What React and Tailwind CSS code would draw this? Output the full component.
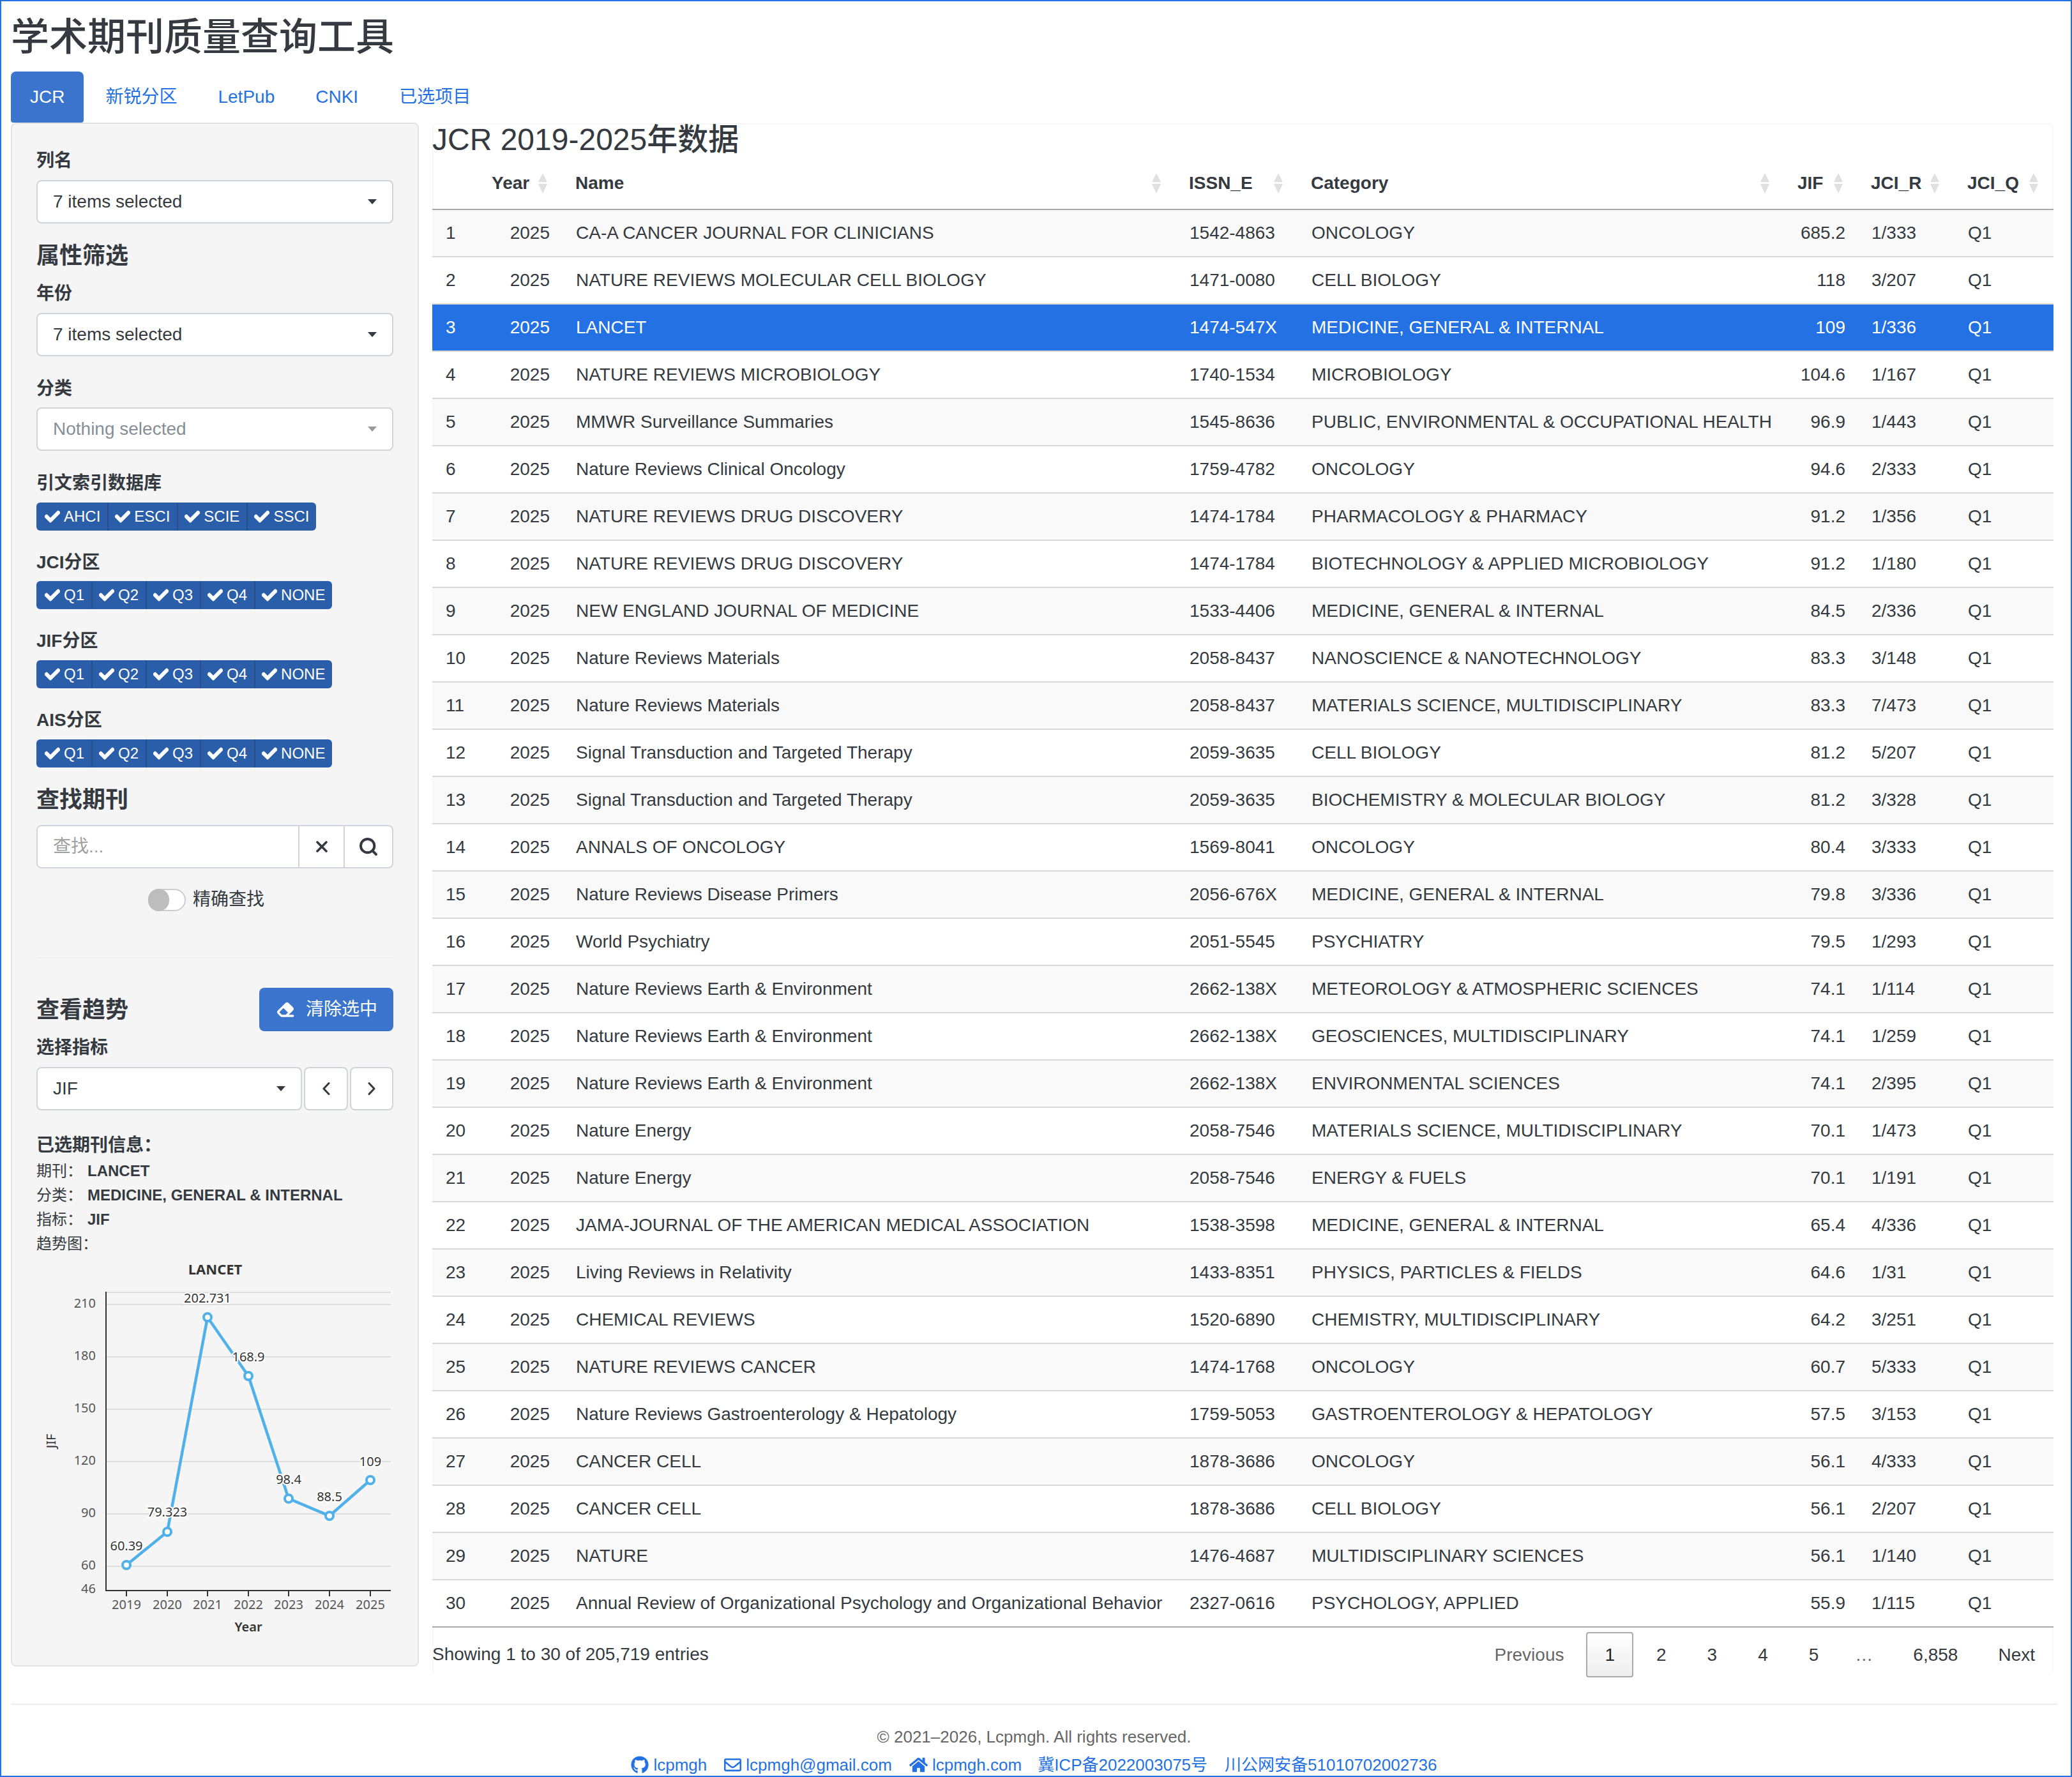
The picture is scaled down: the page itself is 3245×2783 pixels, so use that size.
import React from 'react';
import { FaCheck, FaGithub, FaRegEnvelope, FaHome } from 'react-icons/fa';
import { FaEraser } from 'react-icons/fa6';
import { Search } from 'lucide-react';

const rows = [
  ['CA-A CANCER JOURNAL FOR CLINICIANS', '1542-4863', 'ONCOLOGY', '685.2', '1/333'],
  ['NATURE REVIEWS MOLECULAR CELL BIOLOGY', '1471-0080', 'CELL BIOLOGY', '118', '3/207'],
  ['LANCET', '1474-547X', 'MEDICINE, GENERAL & INTERNAL', '109', '1/336'],
  ['NATURE REVIEWS MICROBIOLOGY', '1740-1534', 'MICROBIOLOGY', '104.6', '1/167'],
  ['MMWR Surveillance Summaries', '1545-8636', 'PUBLIC, ENVIRONMENTAL & OCCUPATIONAL HEALTH', '96.9', '1/443'],
  ['Nature Reviews Clinical Oncology', '1759-4782', 'ONCOLOGY', '94.6', '2/333'],
  ['NATURE REVIEWS DRUG DISCOVERY', '1474-1784', 'PHARMACOLOGY & PHARMACY', '91.2', '1/356'],
  ['NATURE REVIEWS DRUG DISCOVERY', '1474-1784', 'BIOTECHNOLOGY & APPLIED MICROBIOLOGY', '91.2', '1/180'],
  ['NEW ENGLAND JOURNAL OF MEDICINE', '1533-4406', 'MEDICINE, GENERAL & INTERNAL', '84.5', '2/336'],
  ['Nature Reviews Materials', '2058-8437', 'NANOSCIENCE & NANOTECHNOLOGY', '83.3', '3/148'],
  ['Nature Reviews Materials', '2058-8437', 'MATERIALS SCIENCE, MULTIDISCIPLINARY', '83.3', '7/473'],
  ['Signal Transduction and Targeted Therapy', '2059-3635', 'CELL BIOLOGY', '81.2', '5/207'],
  ['Signal Transduction and Targeted Therapy', '2059-3635', 'BIOCHEMISTRY & MOLECULAR BIOLOGY', '81.2', '3/328'],
  ['ANNALS OF ONCOLOGY', '1569-8041', 'ONCOLOGY', '80.4', '3/333'],
  ['Nature Reviews Disease Primers', '2056-676X', 'MEDICINE, GENERAL & INTERNAL', '79.8', '3/336'],
  ['World Psychiatry', '2051-5545', 'PSYCHIATRY', '79.5', '1/293'],
  ['Nature Reviews Earth & Environment', '2662-138X', 'METEOROLOGY & ATMOSPHERIC SCIENCES', '74.1', '1/114'],
  ['Nature Reviews Earth & Environment', '2662-138X', 'GEOSCIENCES, MULTIDISCIPLINARY', '74.1', '1/259'],
  ['Nature Reviews Earth & Environment', '2662-138X', 'ENVIRONMENTAL SCIENCES', '74.1', '2/395'],
  ['Nature Energy', '2058-7546', 'MATERIALS SCIENCE, MULTIDISCIPLINARY', '70.1', '1/473'],
  ['Nature Energy', '2058-7546', 'ENERGY & FUELS', '70.1', '1/191'],
  ['JAMA-JOURNAL OF THE AMERICAN MEDICAL ASSOCIATION', '1538-3598', 'MEDICINE, GENERAL & INTERNAL', '65.4', '4/336'],
  ['Living Reviews in Relativity', '1433-8351', 'PHYSICS, PARTICLES & FIELDS', '64.6', '1/31'],
  ['CHEMICAL REVIEWS', '1520-6890', 'CHEMISTRY, MULTIDISCIPLINARY', '64.2', '3/251'],
  ['NATURE REVIEWS CANCER', '1474-1768', 'ONCOLOGY', '60.7', '5/333'],
  ['Nature Reviews Gastroenterology & Hepatology', '1759-5053', 'GASTROENTEROLOGY & HEPATOLOGY', '57.5', '3/153'],
  ['CANCER CELL', '1878-3686', 'ONCOLOGY', '56.1', '4/333'],
  ['CANCER CELL', '1878-3686', 'CELL BIOLOGY', '56.1', '2/207'],
  ['NATURE', '1476-4687', 'MULTIDISCIPLINARY SCIENCES', '56.1', '1/140'],
  ['Annual Review of Organizational Psychology and Organizational Behavior', '2327-0616', 'PSYCHOLOGY, APPLIED', '55.9', '1/115'],
];

const quartiles = ['Q1', 'Q2', 'Q3', 'Q4', 'NONE'];

const Label = ({ className = '', children }) => (
  <div className={`h-[40px] leading-[40px] font-bold ${className}`}>{children}</div>
);

const Heading = ({ className = '', children }) => (
  <div className={`h-[50px] leading-[50px] text-[36px] font-bold ${className}`}>{children}</div>
);

const Caret = ({ color = 'border-t-[#343a40]' }) => (
  <span className={`w-0 h-0 border-x-[7px] border-t-[8px] border-x-transparent ${color}`} />
);

const SelectBox = ({ className = '', muted = false, children }) => (
  <div className={`h-[68px] bg-white border-2 border-[#ced4da] rounded-[8px] flex items-center justify-between pl-[24px] pr-[24px] ${muted ? 'text-[#868e96]' : ''} ${className}`}>
    <span>{children}</span>
    <Caret color={muted ? 'border-t-[#999999]' : 'border-t-[#343a40]'} />
  </div>
);

const CheckGroup = ({ items, className = '' }) => (
  <div className={`flex w-fit h-[44px] rounded-[6px] bg-[#2b5ea9] text-white text-[24px] overflow-hidden ${className}`}>
    {items.map((item, index) => (
      <div key={item} className={`flex items-center gap-[6px] pr-[11px] ${index > 0 ? 'pl-[10px] border-l-2 border-[#2a4f86]' : 'pl-[13px]'}`}>
        <FaCheck className="w-[24px] h-[24px]" strokeWidth={24} />
        <span>{item}</span>
      </div>
    ))}
  </div>
);

const trend = [
  { year: 2019, label: '60.39', x: 198, y: 2451, ly: 2421 },
  { year: 2020, label: '79.323', x: 262, y: 2399, ly: 2368 },
  { year: 2021, label: '202.731', x: 325, y: 2063, ly: 2033 },
  { year: 2022, label: '168.9', x: 389, y: 2155, ly: 2125 },
  { year: 2023, label: '98.4', x: 452, y: 2347, ly: 2317 },
  { year: 2024, label: '88.5', x: 516, y: 2374, ly: 2344 },
  { year: 2025, label: '109', x: 580, y: 2318, ly: 2289 },
];

const yTicks = [
  { v: 210, y: 2043 },
  { v: 180, y: 2125 },
  { v: 150, y: 2207 },
  { v: 120, y: 2289 },
  { v: 90, y: 2371 },
  { v: 60, y: 2453 },
];

const TrendChart = () => (
  <svg viewBox="57 1967 559 603" className="block w-[559px] h-[603px] font-['Noto_Sans',sans-serif]">
    <text x="337" y="1996" textAnchor="middle" fontSize="22" fontWeight="700" fill="#333">LANCET</text>
    <line x1="166" y1="2024" x2="612" y2="2024" stroke="#dddddd" strokeWidth="2" />
    {yTicks.map((t) => (
      <g key={t.v}>
        <line x1="166" y1={t.y} x2="612" y2={t.y} stroke="#dddddd" strokeWidth="2" />
        <text x="150" y={t.y + 5} textAnchor="end" fontSize="20" fill="#555">{t.v}</text>
      </g>
    ))}
    <text x="150" y="2495" textAnchor="end" fontSize="20" fill="#555">46</text>
    <line x1="166" y1="2023" x2="166" y2="2492" stroke="#333" strokeWidth="2" />
    <line x1="165" y1="2491" x2="612" y2="2491" stroke="#333" strokeWidth="2" />
    {trend.map((p) => (
      <g key={p.year}>
        <line x1={p.x} y1="2491" x2={p.x} y2="2500" stroke="#333" strokeWidth="2" />
        <text x={p.x} y="2520" textAnchor="middle" fontSize="20" fill="#555">{p.year}</text>
      </g>
    ))}
    <text x="389" y="2555" textAnchor="middle" fontSize="20" fontWeight="600" fill="#333">Year</text>
    <text x="0" y="0" transform="translate(87 2257) rotate(-90)" textAnchor="middle" fontSize="20" fill="#333">JIF</text>
    <polyline points={trend.map((p) => `${p.x},${p.y}`).join(' ')} fill="none" stroke="#4fb0ea" strokeWidth="4.5" strokeLinejoin="round" />
    {trend.map((p) => (
      <circle key={p.year} cx={p.x} cy={p.y} r="6" fill="#fff" stroke="#4fb0ea" strokeWidth="4" />
    ))}
    {trend.map((p) => (
      <text key={p.year} x={p.x} y={p.ly + 7} textAnchor="middle" fontSize="20" fill="#333" stroke="#fff" strokeWidth="4" paintOrder="stroke">{p.label}</text>
    ))}
  </svg>
);

const SortIcon = () => (
  <svg viewBox="0 0 14 32" className="absolute right-[24px] top-[28px] w-[14px] h-[32px]">
    <path d="M7 0 L14 14 H0 Z M0 17 H14 L7 32 Z" fill="#e0e0e0" />
  </svg>
);

const headers = ['', 'Year', 'Name', 'ISSN_E', 'Category', 'JIF', 'JCI_R', 'JCI_Q'];

const Sidebar = () => (
  <div className="w-[639px] h-[2418px] shrink-0 bg-[#f5f5f5] border-2 border-[#e3e3e3] rounded-[8px] px-[38px] pt-[38px]">
    <Label>列名</Label>
    <SelectBox className="mt-[10px]">7 items selected</SelectBox>
    <Heading className="mt-[26px]">属性筛选</Heading>
    <Label className="mt-[14px]">年份</Label>
    <SelectBox className="mt-[10px]">7 items selected</SelectBox>
    <Label className="mt-[31px]">分类</Label>
    <SelectBox className="mt-[9px]" muted>Nothing selected</SelectBox>
    <Label className="mt-[31px]">引文索引数据库</Label>
    <CheckGroup className="mt-[10px]" items={['AHCI', 'ESCI', 'SCIE', 'SSCI']} />
    <Label className="mt-[30px]">JCI分区</Label>
    <CheckGroup className="mt-[9px]" items={quartiles} />
    <Label className="mt-[30px]">JIF分区</Label>
    <CheckGroup className="mt-[10px]" items={quartiles} />
    <Label className="mt-[30px]">AIS分区</Label>
    <CheckGroup className="mt-[10px]" items={quartiles} />
    <Heading className="mt-[26px]">查找期刊</Heading>

    <div className="mt-[14px] h-[68px] flex bg-white border-2 border-[#ced4da] rounded-[8px] overflow-hidden">
      <input
        placeholder="查找..."
        className="w-[408px] pl-[24px] outline-none bg-white placeholder:text-[#a0a0a0]"
      />
      <div className="w-[71px] flex items-center justify-center border-l-2 border-[#ced4da]">
        <svg viewBox="0 0 18 18" className="w-[18px] h-[18px]">
          <path d="M2 2 L16 16 M16 2 L2 16" stroke="#343a40" strokeWidth="3.6" strokeLinecap="round" />
        </svg>
      </div>
      <div className="flex-1 flex items-center justify-center border-l-2 border-[#ced4da]">
        <Search className="w-[32px] h-[32px]" strokeWidth={3} />
      </div>
    </div>

    <div className="mt-[29px] h-[40px] ml-[175px] flex items-center gap-[11px]">
      <div className="w-[59px] h-[35px] rounded-full bg-white border-2 border-[#cccccc] relative">
        <span className="absolute left-[-2px] top-[-2px] w-[33px] h-[35px] rounded-full bg-[#bdbdbd]" />
      </div>
      <span>精确查找</span>
    </div>

    <div className="mt-[70px] h-[2px] bg-[#eeeeee]" />

    <div className="mt-[46px] flex items-center justify-between">
      <Heading className="mt-[2px]">查看趋势</Heading>
      <button className="w-[210px] h-[68px] rounded-[8px] bg-[#3a74cc] text-white flex items-center pl-[26px] gap-[17px]">
        <FaEraser className="w-[30px] h-[28px]" />
        <span>清除选中</span>
      </button>
    </div>

    <Label className="mt-[6px]">选择指标</Label>
    <div className="mt-[10px] flex gap-[3px]">
      <SelectBox className="w-[416px]">JIF</SelectBox>
      <div className="w-[69px] h-[68px] bg-white border-2 border-[#ced4da] rounded-[8px] flex items-center justify-center">
        <svg viewBox="0 0 13 20" className="w-[13px] h-[20px]">
          <path d="M11 1.5 L3 10 L11 18.5" fill="none" stroke="#343a40" strokeWidth="3" strokeLinecap="round" strokeLinejoin="round" />
        </svg>
      </div>
      <div className="flex-1 h-[68px] bg-white border-2 border-[#ced4da] rounded-[8px] flex items-center justify-center">
        <svg viewBox="0 0 13 20" className="w-[13px] h-[20px]">
          <path d="M2 1.5 L10 10 L2 18.5" fill="none" stroke="#343a40" strokeWidth="3" strokeLinecap="round" strokeLinejoin="round" />
        </svg>
      </div>
    </div>

    <Label className="mt-[35px]">已选期刊信息：</Label>
    <div className="mt-[1px] text-[24px]">
      {[['期刊：', 'LANCET'], ['分类：', 'MEDICINE, GENERAL & INTERNAL'], ['指标：', 'JIF'], ['趋势图：', '']].map(([k, v]) => (
        <div key={k} className="h-[38px] leading-[38px] flex">
          <span className="w-[80px] shrink-0 whitespace-nowrap">{k}</span>
          <b>{v}</b>
        </div>
      ))}
    </div>
    <TrendChart />
  </div>
);

const JournalTable = () => (
  <div className="w-[2539px] h-[2429px] mt-[1px] ml-[21px] border-x-2 border-t-2 border-[#f7f7f7] rounded-[8px]">
    <div className="h-[48px] leading-[48px] text-[48px] font-medium -ml-[2px] whitespace-nowrap">JCR 2019-2025年数据</div>
    <table className="-ml-[2px] w-[2539px] table-fixed border-separate border-spacing-0">
      <colgroup>
        <col className="w-[73px]" />
        <col className="w-[131px]" />
        <col className="w-[961px]" />
        <col className="w-[191px]" />
        <col className="w-[762px]" />
        <col className="w-[115px]" />
        <col className="w-[151px]" />
        <col className="w-[155px]" />
      </colgroup>
      <thead>
        <tr>
          {headers.map((h, i) => (
            <th key={i} className="relative h-[86px] pl-[20px] pt-[4px] text-left font-bold border-b-2 border-[#a9a9a9]">
              {h}
              {h && <SortIcon />}
            </th>
          ))}
        </tr>
      </thead>
      <tbody>
        {rows.map((r, i) => {
          const selected = i === 2;
          const bg = selected ? 'bg-[#2371e3] text-white' : i % 2 === 0 ? 'bg-[#f9f9f9]' : 'bg-white';
          const border = i === rows.length - 1 ? 'border-[#a9a9a9]' : 'border-[#d8d8d8]';
          const td = `h-[74px] pl-[21px] pr-[20px] border-b-2 whitespace-nowrap ${border}`;
          return (
            <tr key={i} className={bg}>
              <td className={td}>{i + 1}</td>
              <td className={`${td} text-right`}>2025</td>
              <td className={td}>{r[0]}</td>
              <td className={td}>{r[1]}</td>
              <td className={td}>{r[2]}</td>
              <td className={`${td} text-right`}>{r[3]}</td>
              <td className={td}>{r[4]}</td>
              <td className={td}>Q1</td>
            </tr>
          );
        })}
      </tbody>
    </table>
    <div className="-ml-[2px] w-[2539px] flex items-start justify-between">
      <div className="mt-[21px]">Showing 1 to 30 of 205,719 entries</div>
      <div className="mt-[7px] flex items-center gap-[4px]">
        <span className="h-[71px] flex items-center px-[29px] text-[#666666]">Previous</span>
        <span className="h-[71px] ml-[2px] mr-[2px] flex items-center px-[27px] border-2 border-[#aaaaaa] rounded-[4px] bg-gradient-to-b from-white to-[#eeeeee] text-[#222222]">1</span>
        {['2', '3', '4', '5'].map((p) => (
          <span key={p} className="h-[71px] flex items-center px-[30px]">{p}</span>
        ))}
        <span className="h-[71px] w-[80px] pr-[6px] flex items-center justify-center text-[#666666]">…</span>
        <span className="h-[71px] flex items-center px-[30px]">6,858</span>
        <span className="h-[71px] flex items-center px-[29px]">Next</span>
      </div>
    </div>
  </div>
);

const Footer = () => (
  <div className="ml-[15px] mr-[21px] border-t-2 border-[#eeeeee] text-[26px] text-center">
    <div className="mt-[32px] h-[36px] leading-[36px] text-[#666666]">© 2021–2026, Lcpmgh. All rights reserved.</div>
    <div className="mt-[8px] h-[36px] flex items-center justify-center gap-[27px] text-[#2371e3]">
      <span className="flex items-center gap-[7px]"><FaGithub className="w-[28px] h-[28px]" />lcpmgh</span>
      <span className="flex items-center gap-[7px]"><FaRegEnvelope className="w-[27px] h-[28px]" />lcpmgh@gmail.com</span>
      <span className="flex items-center gap-[7px]"><FaHome className="w-[29px] h-[28px]" />lcpmgh.com</span>
      <span className="-ml-[2px]">冀ICP备2022003075号</span>
      <span>川公网安备51010702002736</span>
    </div>
  </div>
);

export default function App() {
  return (
    <div className="w-[3245px] h-[2783px] overflow-hidden border-2 border-[#2371e3] bg-white text-[#343a40] text-[28px] font-['Liberation_Sans','Noto_Sans_CJK_SC',sans-serif]">
      <div className="h-[110px] pl-[15px] pt-[24px] text-[60px] leading-[66px] font-medium">学术期刊质量查询工具</div>

      <div className="h-[80px] pl-[15px] flex gap-[4px] text-[#2371e3]">
        <div className="px-[30px] flex items-center rounded-t-[8px] rounded-b-[4px] bg-[#3a74cc] text-white">JCR</div>
        <div className="px-[30px] flex items-center">新锐分区</div>
        <div className="px-[30px] flex items-center">LetPub</div>
        <div className="px-[30px] flex items-center">CNKI</div>
        <div className="px-[30px] flex items-center">已选项目</div>
      </div>

      <div className="h-[2476px] pl-[15px] flex items-start">
        <Sidebar />
        <JournalTable />
      </div>

      <Footer />
    </div>
  );
}
